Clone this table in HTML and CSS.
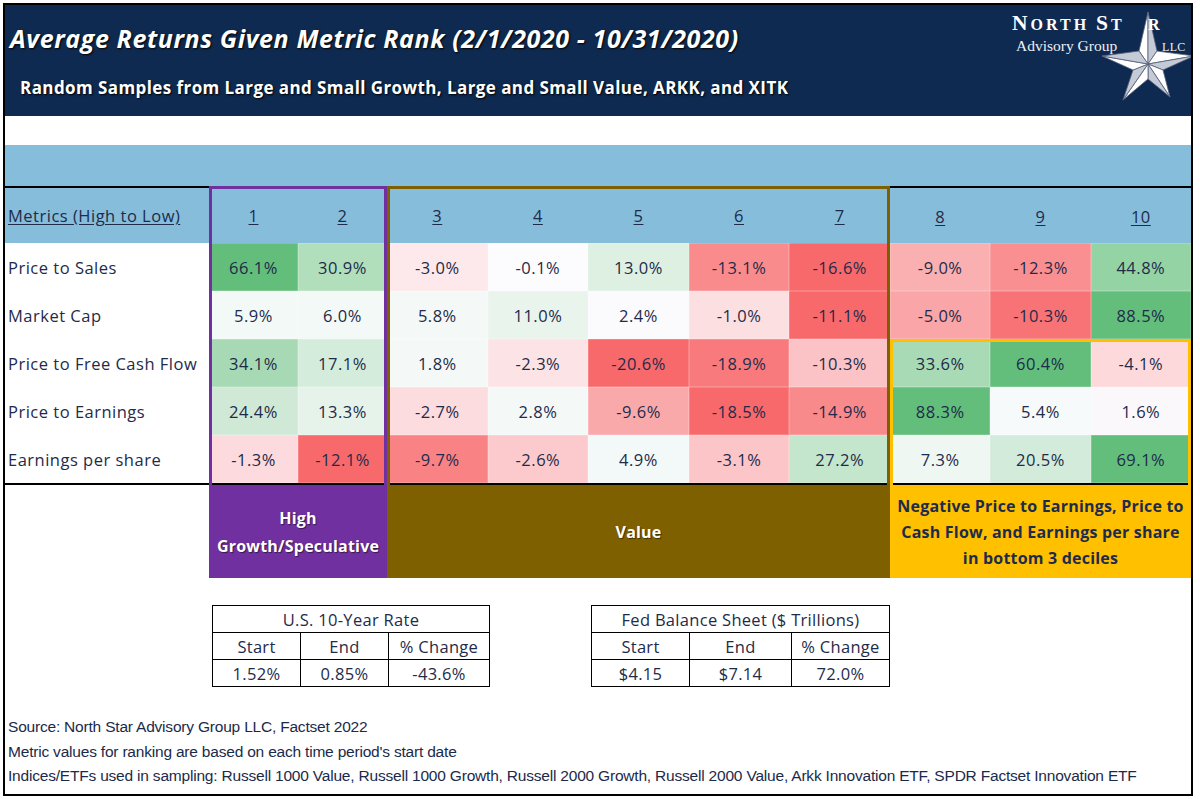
FILE: index.html
```html
<!DOCTYPE html>
<html>
<head>
<meta charset="utf-8">
<link rel="stylesheet" href="styles.css">
</head>
<body>
<div class="frame">
  <header class="head">
    <div class="titles">
      <h1 class="title">Average Returns Given Metric Rank (2/1/2020 - 10/31/2020)</h1>
      <p class="subtitle">Random Samples from Large and Small Growth, Large and Small Value, ARKK, and XITK</p>
    </div>
    <div class="logo">
      <svg class="star" width="110" height="110" viewBox="-55 -55 110 110">
        <g stroke="#55607a" stroke-width="0.8" stroke-linejoin="round">
          <polygon points="0,0 0,-52 -9,-13" fill="#ffffff"/>
          <polygon points="0,0 0,-52 9,-13" fill="#c4cad6"/>
          <polygon points="0,0 46,-8 9,-13" fill="#ffffff"/>
          <polygon points="0,0 46,-8 15,6" fill="#c4cad6"/>
          <polygon points="0,0 22,33 15,6" fill="#ffffff"/>
          <polygon points="0,0 22,33 0,15" fill="#c4cad6"/>
          <polygon points="0,0 -25,36 0,15" fill="#ffffff"/>
          <polygon points="0,0 -25,36 -15,6" fill="#c4cad6"/>
          <polygon points="0,0 -46,-8 -15,6" fill="#ffffff"/>
          <polygon points="0,0 -46,-8 -9,-13" fill="#c4cad6"/>
        </g>
      </svg>
      <div class="logo-name"><span class="big">N</span>ORTH <span class="big">S</span>T<span class="hidden-a">A</span>R</div>
      <div class="logo-sub">Advisory Group</div>
      <div class="llc">LLC</div>
    </div>
  </header>

  <div class="gap"></div>
  <div class="band"></div>

  <div class="grid">
    <div class="labels">
      <div class="hcell lined"><span class="u">Metrics (High to Low)</span></div>
      <div class="lrow">Price to Sales</div>
      <div class="lrow">Market Cap</div>
      <div class="lrow">Price to Free Cash Flow</div>
      <div class="lrow">Price to Earnings</div>
      <div class="lrow">Earnings per share</div>
      <div class="sep"></div>
      <div class="block blank"></div>
    </div>

    <div class="group purple">
      <div class="hrow"><div class="hnum"><span class="u">1</span></div><div class="hnum"><span class="u">2</span></div></div>
      <div class="row"><div class="c" style="background:#63be7b">66.1%</div><div class="c" style="background:#b1dfbc">30.9%</div></div>
      <div class="row"><div class="c" style="background:#f3f9f6">5.9%</div><div class="c" style="background:#f3f9f6">6.0%</div></div>
      <div class="row"><div class="c" style="background:#a7dab4">34.1%</div><div class="c" style="background:#d4ecdb">17.1%</div></div>
      <div class="row"><div class="c" style="background:#cfe9d6">24.4%</div><div class="c" style="background:#e6f3ea">13.3%</div></div>
      <div class="row"><div class="c" style="background:#fcdadd">-1.3%</div><div class="c" style="background:#f8696b">-12.1%</div></div>
      <div class="sep"></div>
      <div class="block pblock">High<br>Growth/Speculative</div>
    </div>

    <div class="group brown">
      <div class="hrow"><div class="hnum"><span class="u">3</span></div><div class="hnum"><span class="u">4</span></div><div class="hnum"><span class="u">5</span></div><div class="hnum"><span class="u">6</span></div><div class="hnum"><span class="u">7</span></div></div>
      <div class="row"><div class="c" style="background:#fde9eb">-3.0%</div><div class="c" style="background:#fcfcff">-0.1%</div><div class="c" style="background:#ddf0e2">13.0%</div><div class="c" style="background:#f98b8d">-13.1%</div><div class="c" style="background:#f8696b">-16.6%</div></div>
      <div class="row"><div class="c" style="background:#f4f9f7">5.8%</div><div class="c" style="background:#e8f4ec">11.0%</div><div class="c" style="background:#fbfbfe">2.4%</div><div class="c" style="background:#fcdfe1">-1.0%</div><div class="c" style="background:#f8696b">-11.1%</div></div>
      <div class="row"><div class="c" style="background:#f4f9f7">1.8%</div><div class="c" style="background:#fce4e6">-2.3%</div><div class="c" style="background:#f8696b">-20.6%</div><div class="c" style="background:#f87a7c">-18.9%</div><div class="c" style="background:#fbc3c5">-10.3%</div></div>
      <div class="row"><div class="c" style="background:#fcdcde">-2.7%</div><div class="c" style="background:#f4f9f7">2.8%</div><div class="c" style="background:#faa9ab">-9.6%</div><div class="c" style="background:#f8696b">-18.5%</div><div class="c" style="background:#f98a8c">-14.9%</div></div>
      <div class="row"><div class="c" style="background:#f98284">-9.7%</div><div class="c" style="background:#fccacd">-2.6%</div><div class="c" style="background:#f3f9f8">4.9%</div><div class="c" style="background:#fcc5c8">-3.1%</div><div class="c" style="background:#c4e6cd">27.2%</div></div>
      <div class="sep"></div>
      <div class="block bblock">Value</div>
    </div>

    <div class="rgroup">
      <div class="hrow lined"><div class="hnum"><span class="u">8</span></div><div class="hnum"><span class="u">9</span></div><div class="hnum"><span class="u">10</span></div></div>
      <div class="row"><div class="c" style="background:#faafb1">-9.0%</div><div class="c" style="background:#f98f91">-12.3%</div><div class="c" style="background:#94d3a4">44.8%</div></div>
      <div class="row"><div class="c" style="background:#faa5a7">-5.0%</div><div class="c" style="background:#f87375">-10.3%</div><div class="c" style="background:#63be7b">88.5%</div></div>
      <div class="obox">
        <div class="row"><div class="c" style="background:#a8dbb5">33.6%</div><div class="c" style="background:#63be7b">60.4%</div><div class="c" style="background:#fdd9dc">-4.1%</div></div>
        <div class="row"><div class="c" style="background:#63be7b">88.3%</div><div class="c" style="background:#f6fafa">5.4%</div><div class="c" style="background:#fbf8fb">1.6%</div></div>
        <div class="row"><div class="c" style="background:#eef7f1">7.3%</div><div class="c" style="background:#d3ebda">20.5%</div><div class="c" style="background:#63be7b">69.1%</div></div>
        <div class="sep"></div>
        <div class="block oblock">Negative Price to Earnings, Price to<br>Cash Flow, and Earnings per share<br>in bottom 3 deciles</div>
      </div>
    </div>
  </div>

  <div class="tables">
    <table class="mini t1">
      <tr><td colspan="3">U.S. 10-Year Rate</td></tr>
      <tr><td>Start</td><td>End</td><td>% Change</td></tr>
      <tr><td>1.52%</td><td>0.85%</td><td>-43.6%</td></tr>
    </table>
    <table class="mini t2">
      <tr><td colspan="3">Fed Balance Sheet ($ Trillions)</td></tr>
      <tr><td>Start</td><td>End</td><td>% Change</td></tr>
      <tr><td>$4.15</td><td>$7.14</td><td>72.0%</td></tr>
    </table>
  </div>

  <div class="notes">
    <p>Source: North Star Advisory Group LLC, Factset 2022</p>
    <p>Metric values for ranking are based on each time period's start date</p>
    <p>Indices/ETFs used in sampling: Russell 1000 Value, Russell 1000 Growth, Russell 2000 Growth, Russell 2000 Value, Arkk Innovation ETF, SPDR Factset Innovation ETF</p>
  </div>
</div>
</body>
</html>
```

FILE: styles.css
```css
* { box-sizing: border-box; }
html, body { margin: 0; padding: 0; background: #ffffff; }
body { font-family: "Open Sans", "Noto Sans", sans-serif; color: #1e2b4a; }

.frame {
  margin: 3px;
  width: 1190px;
  height: 793px;
  border: 2px solid #000;
  overflow: hidden;
}

.head {
  height: 111px;
  background: #0f2a50;
  position: relative;
  display: flex;
}
.titles { padding: 16px 0 0 5px; }
.title {
  margin: 0;
  font-size: 25px;
  font-weight: 700;
  font-style: italic;
  color: #fff;
  line-height: 34px;
  letter-spacing: 0.6px;
  white-space: nowrap;
  text-shadow: 1px 1px 2px #000;
}
.subtitle {
  margin: 21px 0 0 10px;
  font-size: 17px;
  font-weight: 700;
  color: #fff;
  line-height: 24px;
  letter-spacing: 0.42px;
  white-space: nowrap;
  text-shadow: 1px 1px 2px #000;
}

.logo {
  position: absolute;
  left: 1000px;
  top: 0;
  width: 188px;
  height: 111px;
  font-family: "Liberation Serif", "DejaVu Serif", serif;
  color: #fff;
}
.star {
  position: absolute;
  left: 88px;
  top: 4px;
}
.logo-name {
  position: absolute;
  left: 7px;
  top: 6px;
  font-size: 16px;
  font-weight: 700;
  letter-spacing: 3px;
  line-height: 24px;
  white-space: nowrap;
}
.logo-name .big { font-size: 21.5px; }
.logo-name .hidden-a { color: transparent; margin-right: 10px; }
.logo-sub {
  position: absolute;
  left: 11px;
  top: 32px;
  font-size: 15.5px;
  line-height: 18px;
  white-space: nowrap;
  color: #eef0f5;
}
.llc {
  position: absolute;
  left: 157px;
  top: 34px;
  font-size: 12px;
  line-height: 16px;
  color: #eef0f5;
  letter-spacing: 0.3px;
}

.gap { height: 29px; }
.band { height: 41px; background: #86bddb; }

.grid { display: flex; height: 392px; }
.labels { width: 204px; }
.group { position: relative; outline-offset: -3px; }
.purple { width: 178px; outline: 3px solid #7030a0; }
.brown { width: 503px; outline: 3px solid #7f6000; }
.rgroup { width: 301px; }

.hcell, .hrow {
  height: 57px;
  background: #86bddb;
  font-size: 16.5px;
  letter-spacing: 0.5px;
  color: #1e2b4a;
}
.hcell { display: flex; align-items: center; padding-left: 3px; }
.lined { border-top: 2px solid #000; }
.hrow { display: flex; }
.hnum { flex: 1; display: flex; align-items: center; justify-content: center; padding-top: 2px; }
.u { text-decoration: underline; text-underline-offset: 2px; }

.lrow {
  height: 48px;
  display: flex;
  align-items: center;
  padding-left: 3px;
  font-size: 16.5px;
  letter-spacing: 0.5px;
}
.row { display: flex; height: 48px; }
.c {
  flex: 1;
  display: flex;
  align-items: center;
  justify-content: center;
  font-size: 16.5px;
  letter-spacing: 0.5px;
  box-shadow: inset 0 0 0 0.5px rgba(255,255,255,0.35);
}
.sep { height: 2px; background: #000; }
.block {
  height: 93px;
  display: flex;
  align-items: center;
  justify-content: center;
  text-align: center;
  font-weight: 700;
  font-size: 16px;
  letter-spacing: 0.2px;
}
.blank { background: #fff; }
.pblock { background: #7030a0; color: #fff; line-height: 28px; text-shadow: 1px 1px 1px rgba(0,0,0,0.5); }
.bblock { background: #7f6000; color: #fff; text-shadow: 1px 1px 1px rgba(0,0,0,0.5); }
.obox { outline: 3px solid #ffc000; outline-offset: -3px; position: relative; }
.oblock { background: #ffc000; color: #1e2b4a; line-height: 26px; white-space: nowrap; padding-top: 1px; }

.tables {
  display: flex;
  align-items: flex-start;
  padding: 27px 0 0 207px;
  height: 135px;
}
.mini {
  border-collapse: collapse;
  font-size: 16.5px;
  letter-spacing: 0.3px;
  color: #1e2b4a;
}
.mini td {
  border: 1px solid #000;
  height: 27px;
  padding: 0;
  text-align: center;
  line-height: 25px;
}
.t1 { width: 278px; }
.t1 tr:nth-child(n+2) td:first-child { width: 88px; }
.t1 tr:nth-child(n+2) td:nth-child(2) { width: 88px; }
.t2 { width: 299px; margin-left: 101px; }
.t2 tr:nth-child(n+2) td:nth-child(1) { width: 98px; }
.t2 tr:nth-child(n+2) td:nth-child(2) { width: 102px; }

.notes {
  padding: 2px 0 0 3px;
  font-family: "Liberation Sans", Arial, sans-serif;
  font-size: 15.5px;
  letter-spacing: -0.2px;
  color: #1b2a4a;
}
.notes p { margin: 0; height: 24.5px; line-height: 24.5px; white-space: nowrap; }
```
